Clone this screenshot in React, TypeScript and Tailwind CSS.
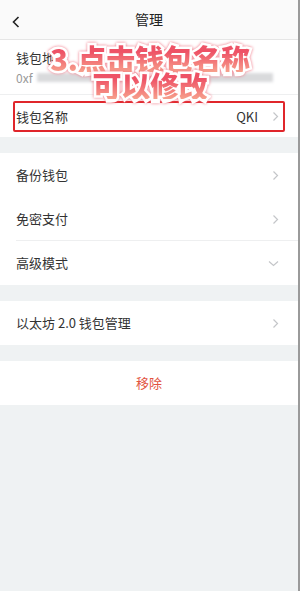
import type { ReactNode } from 'react'

const FONT = '[font-family:"Noto_Sans_CJK_SC","Noto_Sans",sans-serif]'

function ChevronRight() {
  return (
    <svg width="7" height="11" viewBox="0 0 7 11" fill="none">
      <path d="M1.5 1.5 5.5 5.5 1.5 9.5" stroke="#c4c6c9" strokeWidth="1.2" />
    </svg>
  )
}

function ChevronDown() {
  return (
    <svg width="11" height="7" viewBox="0 0 11 7" fill="none">
      <path d="M1 1.5 5.5 5.5 10 1.5" stroke="#c4c6c9" strokeWidth="1.2" />
    </svg>
  )
}

function Row({ label, right, divider }: { label: string; right?: ReactNode; divider?: boolean }) {
  return (
    <div className="relative flex h-[44px] items-center justify-between pl-4 pr-[19px]">
      <span className="text-[13px] text-[#333]">{label}</span>
      {right ?? <ChevronRight />}
      {divider && <div className="absolute bottom-0 left-4 right-0 h-px bg-[#eeeff0]" />}
    </div>
  )
}

export default function App() {
  return (
    <div className={`relative h-[591px] w-[300px] overflow-hidden border-r-2 border-[#9a9a9a] bg-[#eff2f3] ${FONT}`}>
      {/* header */}
      <div className="relative flex h-10 items-center justify-center border-b border-[#e6e6e6] bg-[#fafafa]">
        <svg className="absolute left-[11px] top-[16px]" width="10" height="12" viewBox="0 0 10 12" fill="none">
          <path d="M7.5 1 2.5 6 7.5 11" stroke="#222" strokeWidth="1.6" />
        </svg>
        <span className="text-[14px] text-[#222]">管理</span>
      </div>

      {/* address + name */}
      <div className="bg-white">
        <div className="flex h-[55px] flex-col justify-center gap-[3px] border-b border-[#eeeff0] pl-4">
          <span className="text-[13px] leading-[18px] text-[#333]">钱包地址</span>
          <div className="flex items-center">
            <span className="text-[12px] leading-[16px] text-[#999]">0xf</span>
            <div className="ml-1 h-[9px] w-[236px] bg-[#d9dadc] blur-[1.5px]" />
          </div>
        </div>
        <div className="flex h-[42px] items-center px-[13px] pt-[1px]">
          <div className="flex h-[31px] w-full items-center justify-between rounded-[2px] border-2 border-[#e0262b] pl-[1px] pr-[4px]">
            <span className="text-[13px] text-[#333]">钱包名称</span>
            <div className="flex items-center gap-[14px]">
              <span className="text-[13px] text-[#333]">QKI</span>
              <ChevronRight />
            </div>
          </div>
        </div>
      </div>

      <div className="mt-4 bg-white">
        <Row label="备份钱包" />
        <Row label="免密支付" divider />
        <Row label="高级模式" right={<ChevronDown />} />
      </div>

      <div className="mt-4 bg-white">
        <Row label="以太坊 2.0 钱包管理" />
      </div>

      <div className="mt-4 flex h-[44px] items-center justify-center bg-white">
        <span className="text-[13px] text-[#e2543f]">移除</span>
      </div>

      {/* overlay caption */}
      <div className="absolute left-0 top-[45px] flex w-full flex-col items-center pl-[2px]">
        {['3.点击钱包名称', '可以修改'].map((t) => (
          <div key={t} className="relative text-[29px] font-black leading-[27px] tracking-[-0.3px]">
            <span className="block text-white [-webkit-text-stroke:5px_#ffffff] [filter:drop-shadow(0_0_1.5px_#f07080)]">
              {t}
            </span>
            <span className="absolute inset-0 block bg-clip-text text-transparent [background-image:linear-gradient(180deg,#ee5266_25%,#f7a08c_100%)]">
              {t}
            </span>
          </div>
        ))}
      </div>
    </div>
  )
}
